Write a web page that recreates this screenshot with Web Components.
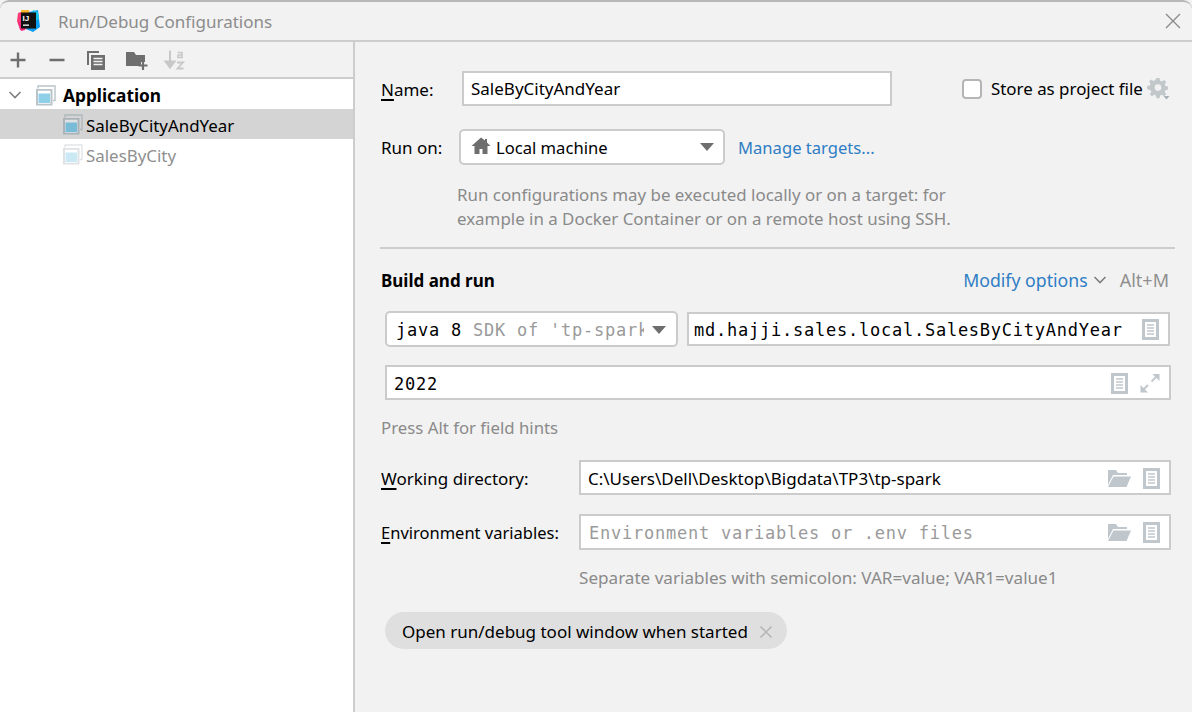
<!DOCTYPE html>
<html><head><meta charset="utf-8"><title>Run/Debug Configurations</title>
<style>
html,body{margin:0;padding:0;width:1192px;height:712px;overflow:hidden;background:#f2f2f2}
body{font-family:"Noto Sans","Open Sans",sans-serif;font-size:17px;color:#000}
</style></head><body>
<template id="icons">
<svg data-i="plus" width="20" height="20" viewBox="0 0 20 20"><path d="M10 2.500v15M2.500 10h15" stroke="#6e6e6e" stroke-width="2.400" fill="none"/></svg>
<svg data-i="minus" width="20" height="20" viewBox="0 0 20 20"><path d="M2.500 10h15" stroke="#6e6e6e" stroke-width="2.400" fill="none"/></svg>
<svg data-i="copy" width="20" height="20" viewBox="0 0 20 20"><path d="M1 1h12v2H3v12H1z" fill="#6e6e6e"/><path d="M5 5h14v15H5z" fill="#6e6e6e"/><path d="M7.500 8.500h9M7.500 11.500h9M7.500 14.500h9" stroke="#f2f2f2" stroke-width="1.400"/></svg>
<svg data-i="folderadd" width="24" height="20" viewBox="0 0 24 20"><path d="M1 2h8l2 3h9v7h-4v4H1z" fill="#6e6e6e"/><path d="M18 11v9M13.500 15.500h9" stroke="#6e6e6e" stroke-width="2.200" fill="none"/></svg>
<svg data-i="sort" width="22" height="22" viewBox="0 0 22 22"><path d="M6 1.500v15M1.500 12.500l4.500 6 4.500-6z" fill="#c8c8c8" stroke="#c8c8c8" stroke-width="2"/><path d="M13.500 3.500h4.500v5h-4v-2.500h4" fill="none" stroke="#c8c8c8" stroke-width="1.600"/><path d="M13 13.500h6l-5.500 6h6" fill="none" stroke="#c8c8c8" stroke-width="1.800"/></svg>
<svg data-i="chev" width="16" height="16" viewBox="0 0 16 16"><path d="M2.500 5l5.500 5.500L13.500 5" fill="none" stroke="#7f7f7f" stroke-width="1.600"/></svg>
<svg data-i="app" width="21" height="21" viewBox="0 0 21 21"><path d="M3 3.500V1h17v14.500h-2" fill="none" stroke="#b9c3c9" stroke-width="1.400"/><path d="M1 4h16.500v16.500H1z" fill="#b9c3c9"/><path d="M3 5.800h12.500v13H3z" fill="#fff"/><path d="M3.500 8.500h11.500v9.500H3.500z" fill="#8dd0e8"/></svg>
<svg data-i="appsel" width="21" height="21" viewBox="0 0 21 21"><path d="M3 3.500V1h17v14.500h-2" fill="none" stroke="#b0b7bb" stroke-width="1.400"/><path d="M1 4h16.500v16.500H1z" fill="#a9b3b9"/><path d="M3 5.800h12.500v13H3z" fill="#dfe2e3"/><path d="M3.500 8.500h11.500v9.500H3.500z" fill="#78bcd8"/></svg>
<svg data-i="appdim" width="21" height="21" viewBox="0 0 21 21"><path d="M3 3.500V1h17v14.500h-2" fill="none" stroke="#e2e6e8" stroke-width="1.400"/><path d="M1 4h16.500v16.500H1z" fill="#dde2e5"/><path d="M3 5.800h12.500v13H3z" fill="#fff"/><path d="M3.500 8.500h11.500v9.500H3.500z" fill="#cbe9f5"/></svg>
<svg data-i="home" width="20" height="18" viewBox="0 0 20 18"><path d="M10 .5L.5 9H3.500v8h5v-5h3v5h5V9h3L16 5.500V2h-2v1.500z" fill="#6e6e6e"/></svg>
<svg data-i="tri" width="14" height="8" viewBox="0 0 14 8"><path d="M0 0h14L7 8z" fill="#6e6e6e"/></svg>
<svg data-i="doc" width="17" height="21" viewBox="0 0 17 21"><path d="M0 0h17v21H0z" fill="#c0c7cc"/><path d="M3 3h11v15H3z" fill="#fff"/><path d="M5 6h7M5 9h7M5 12h7M5 15h7" stroke="#c0c7cc" stroke-width="1.300"/></svg>
<svg data-i="expand" width="20" height="20" viewBox="0 0 20 20"><path d="M11.500 8.500L18 2M1.500 18.500L8 12" stroke="#c0c7cc" stroke-width="1.800"/><path d="M12.500 1h7v7zM.5 12l7.500 7.500H.5z" fill="#c0c7cc"/></svg>
<svg data-i="folder" width="23" height="19" viewBox="0 0 23 19"><path d="M0 1h8l2 3h9v2H5L0 16z" fill="#c0c7cc"/><path d="M5.500 7.500H23L18.500 18H0z" fill="#c0c7cc"/></svg>
<svg data-i="gear" width="23" height="23" viewBox="0 0 23 23"><path fill-rule="evenodd" d="M8.500 1h3l.6 2.700 1.700.7 2.300-1.500 2.100 2.100-1.500 2.300.7 1.700 2.700.6v3l-2.700.6-.7 1.700 1.500 2.300-2.100 2.100-2.300-1.500-1.700.7-.6 2.700h-3l-.6-2.700-1.700-.7-2.300 1.500-2.100-2.100 1.500-2.300-.7-1.700L-.9 12.100v-3l2.700-.6.7-1.700L1 4.500 3.100 2.400l2.300 1.500 1.700-.7zM10 7.300a3.300 3.300 0 1 0 0 6.600 3.300 3.300 0 0 0 0-6.600z" transform="translate(1 0)" fill="#c2c7ca"/><path d="M16.500 19h6l-3 3.500z" fill="#a9afb3"/></svg>
<svg data-i="close" width="18" height="18" viewBox="0 0 18 18"><path d="M2 2l14 14M16 2L2 16" stroke="#8c8c8c" stroke-width="1.400" fill="none"/></svg>
<svg data-i="x" width="14" height="14" viewBox="0 0 14 14"><path d="M1.500 1.500l11 11M12.500 1.500l-11 11" stroke="#b4b4b4" stroke-width="1.500" fill="none"/></svg>
<svg data-i="logo" width="26" height="26" viewBox="0 0 26 26"><path d="M3 5l9-3 3 4-2 15-8 1-3-9z" fill="#fc3a73"/><path d="M6 2h8l1 6-9 3z" fill="#fdb52a"/><path d="M14 4l9-2 1 9 1 8-7 5-7-3z" fill="#0a9cf2"/><path d="M18 2l5 2 1 7-6 3z" fill="#16c4e8"/><path d="M3 14l5-1 2 9-4 1z" fill="#f5247f"/><rect x="6" y="4.500" width="15" height="16" fill="#111"/><text x="7.500" y="12.500" font-family="Liberation Sans,sans-serif" font-weight="700" font-size="8" fill="#fff">IJ</text><rect x="8" y="16.500" width="6" height="1.300" fill="#fff"/></svg>
</template>
<script>
const iconTpl=document.getElementById('icons').content;
class Base extends HTMLElement{
  constructor(){super();this.attachShadow({mode:'open'});this.shadowRoot.innerHTML=this.constructor.html;}
}
function def(name,html){customElements.define(name,class extends Base{static html=html});}
customElements.define('x-icon',class extends HTMLElement{
  constructor(){super();this.attachShadow({mode:'open'});}
  connectedCallback(){
    this.shadowRoot.innerHTML='<style>:host{display:inline-flex;flex:none}svg{display:block;overflow:visible}</style>';
    const s=iconTpl.querySelector('[data-i="'+this.getAttribute('n')+'"]');
    if(s)this.shadowRoot.appendChild(s.cloneNode(true));
  }
});
def('app-window',`<style>
:host{display:flex;flex-direction:column;width:1192px;height:712px;background:#f2f2f2;box-sizing:border-box;border-top:2px solid #b8b8b8;border-top-left-radius:9px;border-top-right-radius:9px;overflow:hidden}
.b{display:flex;flex:1;min-height:0}
</style><slot name="title"></slot><div class="b"><slot name="left"></slot><slot name="right"></slot></div>`);
def('title-bar',`<style>
:host{display:flex;align-items:center;height:40px;box-sizing:border-box;padding:0 10px 1px 15px;border-bottom:2px solid #cdcdcd;color:#8c8c8c;font-size:17px;flex:none}
.t{margin-left:17px;flex:1;padding-top:2px}
</style><slot name="logo"></slot><span class="t"><slot></slot></span><slot name="close"></slot>`);
def('side-panel',`<style>
:host{display:block;width:355px;box-sizing:border-box;border-right:2px solid #cdcdcd;background:#fff;flex:none}
</style><slot></slot>`);
def('tool-bar',`<style>
:host{display:flex;align-items:center;height:37px;box-sizing:border-box;background:#f2f2f2;border-bottom:2px solid #cdcdcd;padding-left:8px;margin-bottom:2px}
</style><slot></slot>`);
def('tree-row',`<style>
:host{display:flex;align-items:center;height:30px;box-sizing:border-box;padding-top:2px;font-size:16.900px;white-space:nowrap}
:host([sel]){background:#d4d4d4}
:host([dim]){color:#8f8f8f}
:host([group]){font-weight:700;height:28px;font-size:17.300px;padding-top:0}
</style><slot></slot>`);
def('form-panel',`<style>
:host{display:flex;flex-direction:column;flex:1;padding:0 17px 0 25px;min-width:0;font-size:17px}
</style><slot></slot>`);
def('form-row',`<style>
:host{display:flex;align-items:center;white-space:nowrap}
</style><slot></slot>`);
def('text-field',`<style>
:host{display:flex;align-items:center;box-sizing:border-box;background:#fff;border:2px solid #cbcbcb;height:35px;padding:0 9px 0 7px;white-space:nowrap;overflow:hidden}
.t{flex:1;min-width:0;overflow:hidden}
.a{display:flex;align-items:center;gap:12px}
</style><span class="t"><slot></slot></span><span class="a"><slot name="after"></slot></span>`);
def('combo-box',`<style>
:host{display:flex;align-items:center;box-sizing:border-box;background:#fff;border:2px solid #cbcbcb;border-radius:5px;height:36px;white-space:nowrap;overflow:hidden}
.t{flex:1;min-width:0;overflow:hidden;display:flex;align-items:center}
</style><span class="t"><slot></slot></span><slot name="after"></slot>`);
def('chip-tag',`<style>
:host{display:inline-flex;align-items:center;align-self:flex-start;box-sizing:border-box;background:#dfdfdf;border-radius:19px;height:37px;padding:2px 14px 0 17px;font-size:17px;white-space:nowrap}
.a{margin-left:11px;display:flex}
</style><slot></slot><span class="a"><slot name="after"></slot></span>`);
def('hr-line',`<style>:host{display:block;height:2px;background:#cdcdcd}</style>`);
def('hint-text',`<style>:host{display:block;color:#8a8a8a;line-height:24px;font-size:16.900px;white-space:nowrap}</style><slot></slot>`);
def('link-text',`<style>:host{color:#2f7dc4;display:inline}</style><slot></slot>`);
def('mono-text',`<style>:host{font-family:"DejaVu Sans Mono","Liberation Mono",monospace;font-size:17px;letter-spacing:.76px;display:inline}</style><slot></slot>`);
</script>
<style>
u{text-decoration-thickness:1.500px;text-underline-offset:3px}
.dim{color:#9a9a9a}
</style>
<app-window>
  <title-bar slot="title"><x-icon slot="logo" n="logo"></x-icon>Run/Debug Configurations<x-icon slot="close" n="close"></x-icon></title-bar>
  <side-panel slot="left">
    <tool-bar>
      <x-icon n="plus"></x-icon>
      <x-icon n="minus" style="margin-left:19px"></x-icon>
      <x-icon n="copy" style="margin-left:19px"></x-icon>
      <x-icon n="folderadd" style="margin-left:19px"></x-icon>
      <x-icon n="sort" style="margin-left:15px"></x-icon>
    </tool-bar>
    <tree-row group>
      <x-icon n="chev" style="margin:0 12px 0 7px"></x-icon>
      <x-icon n="app" style="margin-right:7px"></x-icon>Application
    </tree-row>
    <tree-row sel><x-icon n="appsel" style="margin:0 3px 2px 62px"></x-icon>SaleByCityAndYear</tree-row>
    <tree-row dim><x-icon n="appdim" style="margin:0 3px 2px 62px"></x-icon>SalesByCity</tree-row>
  </side-panel>
  <form-panel slot="right">
    <form-row style="margin:29px 0 0 1px;height:35px">
      <span style="width:81px;padding-top:2px"><u>N</u>ame:</span>
      <text-field style="width:430px">SaleByCityAndYear</text-field>
      <span style="margin-left:70px;width:20px;height:20px;box-sizing:border-box;background:#fff;border:2px solid #b5b5b5;border-radius:4px;flex:none"></span>
      <span style="margin-left:9px;font-size:16.900px">Store as project file</span>
      <x-icon n="gear" style="margin-left:4px"></x-icon>
    </form-row>
    <form-row style="margin:23px 0 0 1px;height:36px">
      <span style="width:78px">Run on:</span>
      <combo-box style="width:266px;font-size:16.600px"><x-icon n="home" style="margin:0 5px 2px 10px"></x-icon>Local machine<x-icon slot="after" n="tri" style="margin-right:9px"></x-icon></combo-box>
      <link-text style="margin-left:13px;font-size:16.600px">Manage targets...</link-text>
    </form-row>
    <hint-text style="margin:18px 0 0 77px">Run configurations may be executed locally or on a target: for<br>example in a Docker Container or on a remote host using SSH.</hint-text>
    <hr-line style="margin-top:16px"></hr-line>
    <form-row style="margin:19px 0 0 1px;height:24px">
      <b style="flex:1;font-size:17px">Build and run</b>
      <link-text style="font-size:17.700px">Modify options</link-text>
      <x-icon n="chev" style="margin:0 12px 0 4px"></x-icon>
      <span style="color:#8f8f8f;margin-right:6px;font-size:18px">Alt+M</span>
    </form-row>
    <form-row style="margin:19px 0 0 5px;height:36px">
      <combo-box style="width:293px;padding-top:2px"><mono-text style="margin-left:9px">java 8 <span class="dim">SDK of 'tp-spark'</span></mono-text><x-icon slot="after" n="tri" style="margin:0 10px 0 8px"></x-icon></combo-box>
      <text-field style="margin-left:9px;flex:1;margin-right:5px;height:34px;padding-left:5px"><mono-text>md.hajji.sales.local.SalesByCityAndYear</mono-text><x-icon slot="after" n="doc"></x-icon></text-field>
    </form-row>
    <text-field style="margin:18px 4px 0 5px;padding-top:1px"><mono-text>2022</mono-text><x-icon slot="after" n="doc"></x-icon><x-icon slot="after" n="expand"></x-icon></text-field>
    <hint-text style="margin:16px 0 0 1px;font-size:16.800px">Press Alt for field hints</hint-text>
    <form-row style="margin:20px 0 0 1px;height:35px">
      <span style="width:198px;padding-top:2px"><u>W</u>orking directory:</span>
      <text-field style="flex:1;margin-right:4px;padding-top:1px">C:\Users\Dell\Desktop\Bigdata\TP3\tp-spark<x-icon slot="after" n="folder"></x-icon><x-icon slot="after" n="doc"></x-icon></text-field>
    </form-row>
    <form-row style="margin:19px 0 0 1px;height:36px">
      <span style="width:198px;font-size:16.500px"><u>E</u>nvironment variables:</span>
      <text-field style="flex:1;margin-right:4px;height:36px;padding-top:1px"><mono-text style="color:#9a9a9a;padding-left:1px">Environment variables or .env files</mono-text><x-icon slot="after" n="folder"></x-icon><x-icon slot="after" n="doc"></x-icon></text-field>
    </form-row>
    <hint-text style="margin:16px 0 0 199px;font-size:17.100px">Separate variables with semicolon: VAR=value; VAR1=value1</hint-text>
    <chip-tag style="margin:22px 0 0 5px">Open run/debug tool window when started<x-icon slot="after" n="x"></x-icon></chip-tag>
  </form-panel>
</app-window>
</body></html>
